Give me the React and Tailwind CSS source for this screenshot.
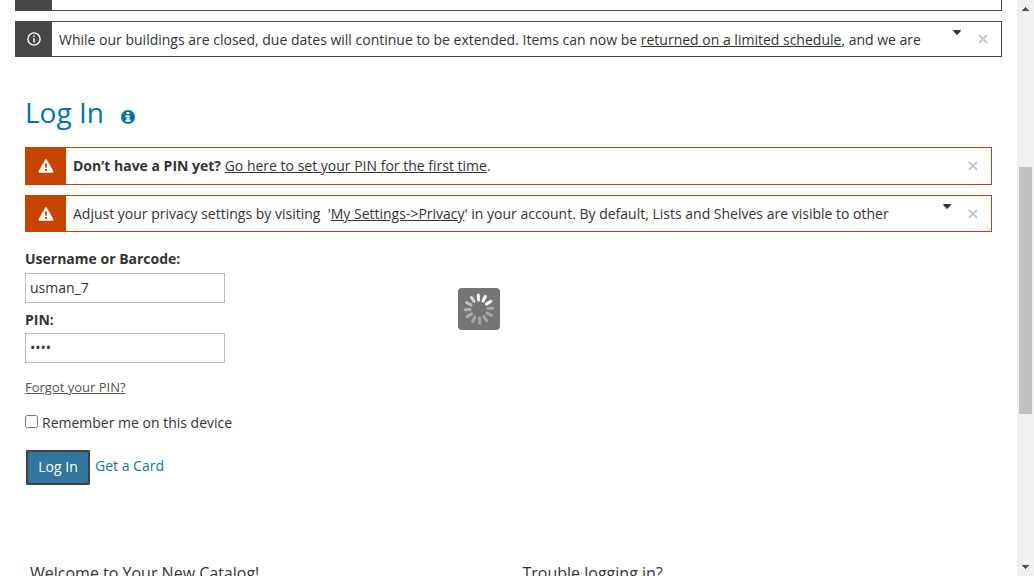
import React from 'react';

function InfoIcon() {
  return (
    <svg viewBox="0 0 14 14" className="size-[14px]" fill="none" stroke="currentColor" aria-hidden="true">
      <circle cx="7" cy="7" r="6.1" strokeWidth="1.4" />
      <path d="M7 6.2v4.3M7 3.5v1.5" strokeWidth="1.5" />
    </svg>
  );
}

function WarningIcon() {
  return (
    <svg viewBox="0 0 16 14" className="h-[14px] w-4" aria-hidden="true">
      <path fill="#fff" d="M8 .3c.5 0 .8.2 1 .6l6.4 11.4c.4.8 0 1.5-.9 1.5h-13c-.9 0-1.3-.7-.9-1.5L7 .9c.2-.4.5-.6 1-.6z" />
      <path fill="#c74300" d="M7 4.6h2l-.3 4.3H7.3zM7 9.9h2v1.8H7z" />
    </svg>
  );
}

function SolidInfoIcon() {
  return (
    <svg viewBox="0 0 14 14" className="size-[14px]" aria-hidden="true">
      <circle cx="7" cy="7" r="7" fill="#0076a3" />
      <path fill="#fff" d="M5.5 1.9h3v2.2h-3zM4.5 5.2h4v4.6h1.2v2H4.5v-2h1.2V7.2H4.5z" />
    </svg>
  );
}

function CloseIcon() {
  return (
    <svg viewBox="0 0 10 10" className="size-[10px]" stroke="#c8c8c8" strokeWidth="2" aria-hidden="true">
      <path d="M1 1l8 8M9 1L1 9" />
    </svg>
  );
}

function CaretIcon() {
  return (
    <svg viewBox="0 0 8 5" className="h-[5px] w-2" fill="#333" aria-hidden="true">
      <path d="M0 .8Q0 0 .8 0h6.4Q8 0 8 .8L4.5 4.7h-1z" />
    </svg>
  );
}

function Notice({ tone = 'info', expandable, className, children }) {
  const warning = tone === 'warning';
  return (
    <div className={`flex border ${warning ? 'border-[#c74300]' : 'border-[#474747]'} ${className}`}>
      <div
        className={`flex shrink-0 items-center justify-center text-white ${
          warning ? 'w-10 bg-[#c74300]' : 'w-9 bg-[#474747]'
        }`}
      >
        {warning ? <WarningIcon /> : <InfoIcon />}
      </div>
      <p className="mt-[7px] min-w-0 flex-1 overflow-hidden whitespace-pre pl-[7px] leading-[21px]">{children}</p>
      {expandable && (
        <button type="button" aria-label="Show more" className="mr-[17px] mt-2 h-[5px] self-start">
          <CaretIcon />
        </button>
      )}
      <button type="button" aria-label="Dismiss" className="mr-[13px] self-center">
        <CloseIcon />
      </button>
    </div>
  );
}

const spokes = [0.95, 1, 1, 0.35, 0.35, 0.35, 0.35, 0.35, 0.4, 0.45, 0.55, 0.7];

function Spinner() {
  return (
    <div
      role="status"
      aria-label="Loading"
      className="absolute left-[458px] top-1/2 flex size-[42px] items-center justify-center rounded bg-[#757575]"
    >
      <svg viewBox="0 0 32 32" className="size-8" stroke="#fff" strokeWidth="3" strokeLinecap="round">
        {spokes.map((opacity, i) => (
          <path key={i} d="M16 2v5" opacity={opacity} transform={`rotate(${i * 30 - 3} 16 16)`} />
        ))}
      </svg>
    </div>
  );
}

function ScrollRail() {
  return (
    <div className="flex w-[17px] shrink-0 flex-col items-center justify-between bg-[#f0f0f0]" aria-hidden="true">
      <svg viewBox="0 0 7 4" className="mt-[7px] h-1 w-[7px]" fill="#505050">
        <path d="M3 0h1v1h1v1h1v1h1v1H0V3h1V2h1V1h1z" />
      </svg>
      <div className="flex w-full flex-1 flex-col items-center">
        <div className="h-[156px]" />
        <div className="h-[247px] w-[13px] bg-[#c1c1c1]" />
      </div>
      <svg viewBox="0 0 7 4" className="mb-[7px] h-1 w-[7px]" fill="#505050">
        <path d="M0 0h7v1H6v1H5v1H4v1H3V3H2V2H1V1H0z" />
      </svg>
    </div>
  );
}

export default function App() {
  return (
    <div className="flex h-screen overflow-hidden bg-white font-['Open_Sans',sans-serif] text-sm text-[#333]">
      <div className="relative min-w-0 flex-1 overflow-hidden px-[15px]">
        <div className="flex h-[11px] border border-t-0 border-[#474747]">
          <div className="w-9 bg-[#474747]" />
        </div>
        <Notice expandable className="mt-[10px] h-9">
          While our buildings are closed, due dates will continue to be extended. Items can now be{' '}
          <a href="#schedule" className="underline">returned on a limited schedule</a>, and we are
        </Notice>

        <main className="px-[10px]">
          <div className="mt-[35px] flex items-center">
            <h1 className="text-[28px] leading-10 text-[#0072b5]">Log In</h1>
            <button type="button" aria-label="Login help" className="ml-[17px] mt-[10px]">
              <SolidInfoIcon />
            </button>
          </div>

          <Notice tone="warning" className="mt-[15px] h-[38px]">
            <strong>Don’t have a PIN yet?</strong>{' '}
            <a href="#set-pin" className="underline">Go here to set your PIN for the first time</a>.
          </Notice>
          <Notice tone="warning" expandable className="mt-[10px] h-[37px]">
            {"Adjust your privacy settings by visiting  '"}
            <a href="#privacy" className="underline">{'My Settings->Privacy'}</a>
            {"' in your account. By default, Lists and Shelves are visible to other"}
          </Notice>

          <form className="mt-[17px]" onSubmit={(e) => e.preventDefault()}>
            <label htmlFor="username" className="block font-bold leading-5">Username or Barcode:</label>
            <input
              id="username"
              type="text"
              defaultValue="usman_7"
              className="mt-1 block h-[30px] w-[200px] border border-[#bbb] px-1 pb-[2px]"
            />
            <label htmlFor="pin" className="mt-[7px] block font-bold leading-5">PIN:</label>
            <input
              id="pin"
              type="password"
              defaultValue="1234"
              className="mt-[3px] block h-[30px] w-[200px] border border-[#bbb] px-1 pb-[2px]"
            />
            <a href="#forgot" className="mt-[14px] block w-fit text-[13px] leading-5 text-[#555] underline">Forgot your PIN?</a>
            <div className="mt-4 flex items-start gap-1">
              <input id="remember" type="checkbox" className="mt-[2px] size-[13px]" />
              <label htmlFor="remember" className="leading-5">Remember me on this device</label>
            </div>
            <div className="mt-4 flex items-start gap-1">
              <div className="border border-transparent bg-[#33769e] bg-clip-padding">
                <button
                  type="submit"
                  className="block h-[35px] min-w-16 rounded border-2 border-[#404040] bg-[#33769e] px-[10px] pb-[2px] font-medium text-white"
                >
                  Log In
                </button>
              </div>
              <a href="#card" className="mt-[7px] leading-5 text-[#0f76a3]">Get a Card</a>
            </div>
          </form>

          <div className="mt-[75px] grid grid-cols-2 text-base">
            <h2 className="pl-[5px]">Welcome to Your New Catalog!</h2>
            <h2 className="pl-[14px]">Trouble logging in?</h2>
          </div>
        </main>
        <Spinner />
      </div>
      <ScrollRail />
    </div>
  );
}
